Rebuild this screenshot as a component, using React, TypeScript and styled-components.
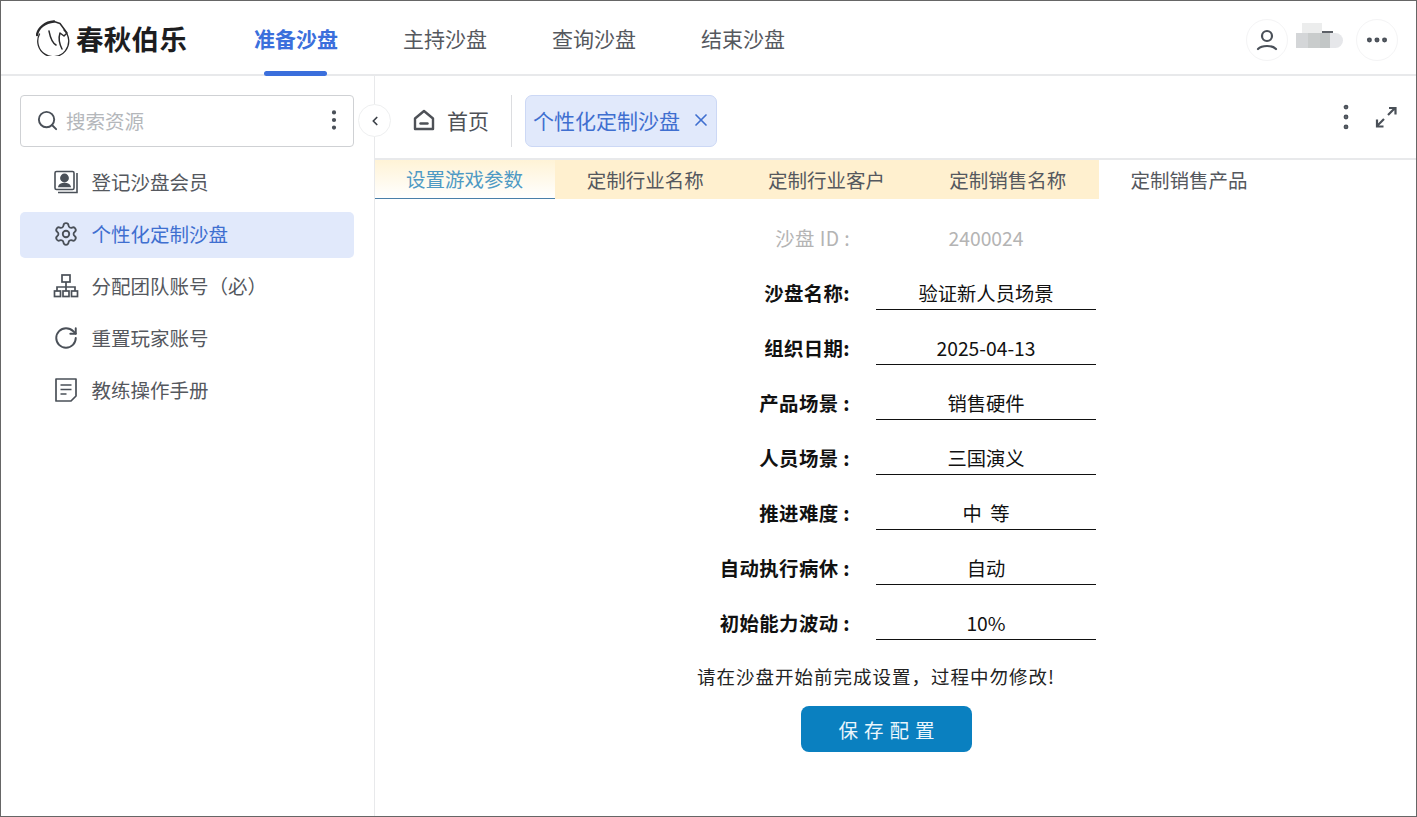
import { ChevronLeft, EllipsisVertical, Ellipsis, RotateCw, Search, Settings, X } from 'lucide-react';
import styled, { createGlobalStyle } from 'styled-components';

// ====

const GlobalStyle = createGlobalStyle`
  html, body {
    margin: 0;
    padding: 0;
    background: #fff;
    font-family: "Noto Sans CJK SC", "Noto Sans", sans-serif;
  }
  * {
    box-sizing: border-box;
  }
`;

const Root = styled.div`
  width: 1417px;
  height: 817px;
  border: 1px solid #666;
  display: flex;
  flex-direction: column;
  overflow: hidden;
`;

const Header = styled.header`
  height: 75px;
  flex: none;
  display: flex;
  align-items: center;
  border-bottom: 2px solid #e8e9eb;
  padding: 0 18px 0 35px;
`;

const Logo = styled.div`
  width: 218px;
  display: flex;
  align-items: center;
  gap: 4px;
  color: #1d1d1f;
  font-size: 27.5px;
  font-weight: 700;
  letter-spacing: 0.3px;
`;

const Nav = styled.nav`
  display: flex;
  flex: 1;
  gap: 65px;
  height: 100%;
`;

const NavItem = styled.div<{ $active?: boolean }>`
  position: relative;
  display: flex;
  align-items: center;
  font-size: 21px;
  font-weight: ${({ $active }) => ($active ? 700 : 400)};
  color: ${({ $active }) => ($active ? '#3b6fdc' : '#55585e')};
  &::after {
    content: '';
    display: ${({ $active }) => ($active ? 'block' : 'none')};
    position: absolute;
    left: 10px;
    right: 11px;
    bottom: -2px;
    height: 5px;
    border-radius: 3px;
    background: #3b6fdc;
  }
`;

const UserArea = styled.div`
  display: flex;
  align-items: center;
  margin-top: 4px;
`;

const RoundButton = styled.div`
  width: 42px;
  height: 42px;
  border-radius: 50%;
  border: 1px solid #f4f4f5;
  display: flex;
  align-items: center;
  justify-content: center;
  color: #4a5058;
`;

const BlurName = styled.div`
  position: relative;
  width: 47px;
  height: 15px;
  margin: 0 13px 0 8px;
  transform: translateY(1px);
  border-radius: 0 8px 8px 0;
  background: linear-gradient(90deg, #d4d6d8 0 25%, #c9cccc 25% 50%, #c2c6c6 50% 72%, #e6e7ea 72%);
  &::before {
    content: '';
    position: absolute;
    left: 6px;
    top: -10px;
    width: 20px;
    height: 10px;
    background: #eceded;
  }
  &::after {
    content: '';
    position: absolute;
    left: 26px;
    top: -2px;
    width: 11px;
    height: 2px;
    background: #5c6066;
  }
`;

const Body = styled.div`
  flex: 1;
  display: flex;
  min-height: 0;
`;

const Sidebar = styled.aside`
  position: relative;
  width: 374px;
  flex: none;
  border-right: 1px solid #e8e9eb;
  padding: 19px 19px 0;
`;

const SearchBox = styled.div`
  height: 52px;
  width: 334px;
  border: 1px solid #cfd1d4;
  border-radius: 4px;
  display: flex;
  align-items: center;
  padding: 0 6px 2px 15px;
  gap: 7px;
  color: #4a5058;
`;

const SearchText = styled.span`
  flex: 1;
  font-size: 19.5px;
  color: #b4b7bb;
`;

const Collapse = styled.div`
  position: absolute;
  top: 28px;
  right: -17px;
  width: 33px;
  height: 33px;
  border-radius: 50%;
  border: 1px solid #eeeff0;
  background: #fff;
  display: flex;
  align-items: center;
  justify-content: center;
  color: #3c4148;
  z-index: 1;
`;

const Menu = styled.div`
  display: flex;
  flex-direction: column;
  gap: 6px;
  margin-top: 13px;
  width: 334px;
`;

const MenuItem = styled.div<{ $active?: boolean }>`
  height: 46px;
  display: flex;
  align-items: center;
  gap: 12.5px;
  padding: 0 0 3px 33px;
  border-radius: 5px;
  font-size: 19.5px;
  color: ${({ $active }) => ($active ? '#3f6fd0' : '#55585e')};
  background: ${({ $active }) => ($active ? '#e1e9fb' : 'transparent')};
`;

const MenuIcon = styled.span`
  width: 26px;
  height: 26px;
  display: flex;
  align-items: center;
  justify-content: center;
  color: #4a5058;
`;

const Main = styled.main`
  flex: 1;
  min-width: 0;
  display: flex;
  flex-direction: column;
`;

const TabBar = styled.div`
  height: 84px;
  flex: none;
  display: flex;
  align-items: center;
  border-bottom: 2px solid #e8e9eb;
  padding: 8px 18px 0 37px;
`;

const HomeTab = styled.div`
  display: flex;
  align-items: center;
  gap: 11px;
  font-size: 21px;
  color: #4e5157;
  height: 52px;
  padding: 0 22px 3px 0;
  border-right: 1px solid #dcdde0;
`;

const OpenTab = styled.div`
  margin-left: 13px;
  height: 52px;
  width: 192px;
  background: #e1e9fb;
  border: 1px solid #ccd8f5;
  border-radius: 7px;
  display: flex;
  align-items: center;
  padding: 0 0 3px 7px;
  gap: 11px;
  font-size: 21px;
  color: #3f6fd0;
`;

const TabActions = styled.div`
  margin-left: auto;
  margin-bottom: 8px;
  display: flex;
  align-items: center;
  gap: 11px;
  color: #4a5058;
`;

const StepBar = styled.div`
  height: 39px;
  flex: none;
  display: flex;
`;

const Step = styled.div<{ $state: 'active' | 'todo' | 'plain'; $narrow?: boolean }>`
  width: ${({ $narrow }) => ($narrow ? '180px' : '181.3px')};
  display: flex;
  align-items: center;
  justify-content: center;
  padding: 0 1px 1px 0;
  font-size: 19.5px;
  color: ${({ $state }) => ($state === 'active' ? '#4f9ac4' : '#55585e')};
  background: ${({ $state }) => {
    if ($state === 'active') return 'linear-gradient(180deg, #fff3d6, #ffffff)';
    if ($state === 'todo') return '#fff0cf';
    return 'transparent';
  }};
  border-bottom: ${({ $state }) => ($state === 'active' ? '1px solid #4a7fa8' : '0')};
`;

const Form = styled.div`
  display: flex;
  flex-direction: column;
  margin-top: 25px;
`;

const Row = styled.div`
  height: 55px;
  display: grid;
  grid-template-columns: 475px 220px;
  column-gap: 26px;
`;

const Label = styled.div<{ $muted?: boolean }>`
  height: 30px;
  line-height: 28px;
  text-align: right;
  white-space: pre;
  font-size: 19.4px;
  letter-spacing: 0.4px;
  font-weight: ${({ $muted }) => ($muted ? 400 : 700)};
  color: ${({ $muted }) => ($muted ? '#b4b4b4' : '#111')};
`;

const Value = styled.div<{ $muted?: boolean }>`
  height: 31px;
  line-height: 28px;
  text-align: center;
  white-space: pre;
  font-size: 19.3px;
  color: ${({ $muted }) => ($muted ? '#b4b4b4' : '#111')};
  border-bottom: ${({ $muted }) => ($muted ? '0' : '1px solid #111')};
`;

const Notice = styled.div`
  margin-left: 322px;
  font-size: 18.5px;
  letter-spacing: 1px;
  line-height: 24px;
  color: #222;
`;

const SaveButton = styled.button`
  margin: 18px 0 0 426px;
  width: 171px;
  height: 46px;
  border: 0;
  border-radius: 8px;
  padding: 0 0 0 6px;
  background: #0a80c0;
  color: #eaf6fc;
  font-family: inherit;
  font-size: 19.5px;
  letter-spacing: 6px;
`;

const LogoMark = () => (
  <svg width="36" height="36" viewBox="0 0 36 36" fill="none" stroke="#2a2a2c" strokeLinecap="round" strokeLinejoin="round">
    <path d="M28 10A15.500 15.500 0 1 1 3.500 14" strokeWidth="1.3" />
    <path d="M1 15C2 8 9 2 18 1.500" strokeWidth="2.400" />
    <path d="M18 1.500l6 2 7 9.500-3 3-4-3c-2 6 0 12 2 16" strokeWidth="1.500" />
    <path d="M13 11c1 5 2 11 7 14" strokeWidth="1.500" />
  </svg>
);

const UserIcon = () => (
  <svg width="24" height="24" viewBox="0 0 24 24" fill="none" stroke="currentColor" strokeWidth="2.200" strokeLinecap="round">
    <circle cx="12" cy="8" r="5" />
    <path d="M3 21c4-4 14-4 18 0" />
  </svg>
);

const MemberIcon = () => (
  <svg width="26" height="26" viewBox="0 0 26 26" fill="none" stroke="currentColor" strokeWidth="1.600">
    <rect x="2" y="2.500" width="19" height="18" rx="1.500" />
    <path d="M24 4v19.500H5" />
    <circle cx="11.500" cy="9" r="3.600" fill="currentColor" />
    <path d="M6 17.500c1-4 10-4 11 0z" fill="currentColor" />
  </svg>
);

const TeamIcon = () => (
  <svg width="26" height="26" viewBox="0 0 26 26" fill="none" stroke="currentColor" strokeWidth="1.700">
    <rect x="9" y="2" width="8" height="7" />
    <path d="M13 9v5M4 18v-4h18v4M13 14v4" />
    <rect x="1.500" y="18" width="6" height="5.500" />
    <rect x="10" y="18" width="6" height="5.500" />
    <rect x="18.500" y="18" width="6" height="5.500" />
  </svg>
);

const ManualIcon = () => (
  <svg width="26" height="26" viewBox="0 0 26 26" fill="none" stroke="currentColor" strokeWidth="1.700" strokeLinejoin="round">
    <path d="M3 24V2h20v17l-5 5H3z" />
    <path d="M7.500 8h11M7.500 12.500h11M7.500 17h6" />
  </svg>
);

const HomeIcon = () => (
  <svg width="24" height="24" viewBox="0 0 24 24" fill="none" stroke="currentColor" strokeWidth="2.400" strokeLinejoin="round" strokeLinecap="round">
    <path d="M3 10.500 12 3l9 7.500V21H3z" />
    <path d="M8.500 15.500h7" />
  </svg>
);

const ExpandIcon = () => (
  <svg width="24" height="24" viewBox="0 0 24 24" fill="none" stroke="currentColor" strokeWidth="2.200">
    <path d="M14 10l7-7M15 3h6.500v6.500M10 14l-7 7M3 14.500V21.500h6.500" />
  </svg>
);

const menu = [
  { name: '登记沙盘会员', icon: <MemberIcon /> },
  { name: '个性化定制沙盘', icon: <Settings size={28} strokeWidth={1.7} />, active: true },
  { name: '分配团队账号\uFF08必\uFF09', icon: <TeamIcon /> },
  { name: '重置玩家账号', icon: <RotateCw size={28} strokeWidth={1.8} /> },
  { name: '教练操作手册', icon: <ManualIcon /> },
];

const steps: { name: string; state: 'active' | 'todo' | 'plain' }[] = [
  { name: '设置游戏参数', state: 'active' },
  { name: '定制行业名称', state: 'todo' },
  { name: '定制行业客户', state: 'todo' },
  { name: '定制销售名称', state: 'todo' },
  { name: '定制销售产品', state: 'plain' },
];

const fields = [
  ['沙盘名称:', '验证新人员场景'],
  ['组织日期:', '2025-04-13'],
  ['产品场景 :', '销售硬件'],
  ['人员场景 :', '三国演义'],
  ['推进难度 :', '中  等'],
  ['自动执行病休 :', '自动'],
  ['初始能力波动 :', '10%'],
];

const App = () => (
  <Root>
    <GlobalStyle />
    <Header>
      <Logo>
        <LogoMark />
        <span>春秋伯乐</span>
      </Logo>
      <Nav>
        <NavItem $active>准备沙盘</NavItem>
        <NavItem>主持沙盘</NavItem>
        <NavItem>查询沙盘</NavItem>
        <NavItem>结束沙盘</NavItem>
      </Nav>
      <UserArea>
        <RoundButton>
          <UserIcon />
        </RoundButton>
        <BlurName />
        <RoundButton>
          <Ellipsis size={26} strokeWidth={2.6} />
        </RoundButton>
      </UserArea>
    </Header>
    <Body>
      <Sidebar>
        <SearchBox>
          <Search size={23} strokeWidth={2} />
          <SearchText>搜索资源</SearchText>
          <EllipsisVertical size={26} strokeWidth={1.9} />
        </SearchBox>
        <Collapse>
          <ChevronLeft size={14} strokeWidth={3} />
        </Collapse>
        <Menu>
          {menu.map((item) => (
            <MenuItem key={item.name} $active={item.active}>
              <MenuIcon>{item.icon}</MenuIcon>
              {item.name}
            </MenuItem>
          ))}
        </Menu>
      </Sidebar>
      <Main>
        <TabBar>
          <HomeTab>
            <HomeIcon />
            首页
          </HomeTab>
          <OpenTab>
            个性化定制沙盘
            <X size={20} strokeWidth={2} />
          </OpenTab>
          <TabActions>
            <EllipsisVertical size={34} strokeWidth={1.4} />
            <ExpandIcon />
          </TabActions>
        </TabBar>
        <StepBar>
          {steps.map((step, index) => (
            <Step key={step.name} $state={step.state} $narrow={index === 0}>{step.name}</Step>
          ))}
        </StepBar>
        <Form>
          <Row>
            <Label $muted>沙盘 ID :</Label>
            <Value $muted>2400024</Value>
          </Row>
          {fields.map(([label, value]) => (
            <Row key={label}>
              <Label>{label}</Label>
              <Value>{value}</Value>
            </Row>
          ))}
          <Notice>{'请在沙盘开始前完成设置\uFF0C过程中勿修改!'}</Notice>
          <SaveButton>保存配置</SaveButton>
        </Form>
      </Main>
    </Body>
  </Root>
);

export default App;
